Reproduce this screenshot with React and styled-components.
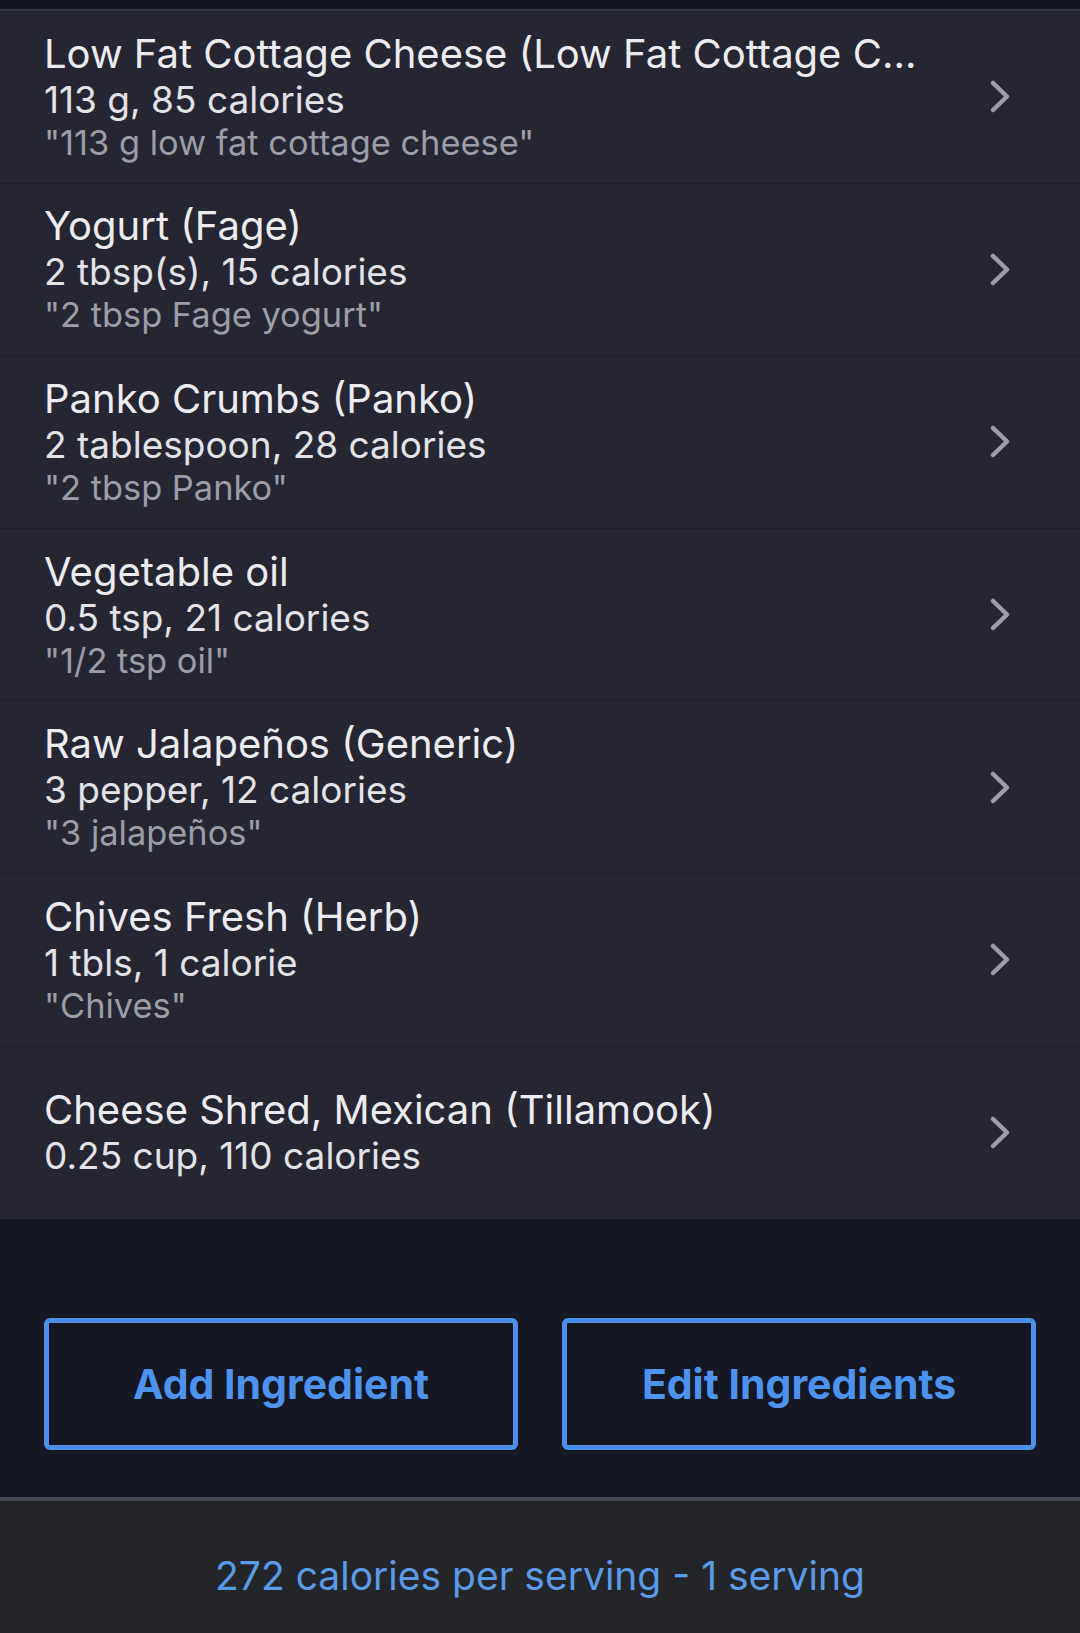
// App.jsx
import React from "react";
import styled, { createGlobalStyle } from "styled-components";

const GlobalStyle = createGlobalStyle`
  html, body {
    margin: 0;
    padding: 0;
    background: #151722;
  }
  body {
    font-family: Inter, "Noto Sans", "Liberation Sans", sans-serif;
    -webkit-font-smoothing: antialiased;
  }
`;

const Page = styled.div`
  width: 1080px;
  height: 1633px;
  display: flex;
  flex-direction: column;
  background: #151722;
  overflow: hidden;
`;

const TopStrip = styled.div`
  height: 9px;
  background: #131622;
  border-bottom: 2px solid #363945;
`;

const List = styled.div`
  display: flex;
  flex-direction: column;
`;

const Row = styled.div`
  height: 171.6px;
  display: flex;
  align-items: center;
  padding: 0 44px;
  background: #252632;
  border-bottom: 1px solid ${(p) => (p.$last ? "#2d2f3b" : "#1d1e28")};
`;

const Texts = styled.div`
  flex: 1;
  min-width: 0;
  display: flex;
  flex-direction: column;
`;

const Title = styled.div`
  font-size: 40px;
  line-height: 48px;
  color: #ececf0;
  white-space: nowrap;
  overflow: hidden;
  text-overflow: ellipsis;
  max-width: 910px;
`;

const Amount = styled.div`
  font-size: 37px;
  line-height: 44px;
  color: #e2e2e7;
`;

const Quote = styled.div`
  font-size: 34.4px;
  line-height: 42px;
  color: #9c9da5;
`;

const Chevron = styled.svg`
  width: 22px;
  height: 35px;
  flex: none;
  margin-right: 25px;
`;

const Actions = styled.div`
  flex: 1;
  display: flex;
  gap: 44px;
  padding: 99px 44px 0;
`;

const ActionButton = styled.button`
  width: 475px;
  height: 132px;
  box-sizing: border-box;
  background: transparent;
  border: 5px solid #4b8fe8;
  border-radius: 6px;
  color: #4d93ee;
  font-family: Inter, "Noto Sans", "Liberation Sans", sans-serif;
  font-size: 41px;
  font-weight: 700;
  cursor: pointer;
`;

const Footer = styled.div`
  height: 136px;
  box-sizing: border-box;
  border-top: 4px solid #44464d;
  background: #242529;
  display: flex;
  align-items: center;
  justify-content: center;
  padding-top: 16px;
  font-size: 39px;
  color: #5a9be8;
`;

const ingredients = [
  {
    name: "Low Fat Cottage Cheese (Low Fat Cottage C...",
    amount: "113 g, 85 calories",
    quote: '"113 g low fat cottage cheese"',
  },
  { name: "Yogurt (Fage)", amount: "2 tbsp(s), 15 calories", quote: '"2 tbsp Fage yogurt"' },
  { name: "Panko Crumbs (Panko)", amount: "2 tablespoon, 28 calories", quote: '"2 tbsp Panko"' },
  { name: "Vegetable oil", amount: "0.5 tsp, 21 calories", quote: '"1/2 tsp oil"' },
  { name: "Raw Jalapeños (Generic)", amount: "3 pepper, 12 calories", quote: '"3 jalapeños"' },
  { name: "Chives Fresh (Herb)", amount: "1 tbls, 1 calorie", quote: '"Chives"' },
  { name: "Cheese Shred, Mexican (Tillamook)", amount: "0.25 cup, 110 calories" },
];

const ChevronIcon = () => (
  <Chevron viewBox="0 0 22 35">
    <polyline
      points="4,4 18,17.5 4,31"
      fill="none"
      stroke="#9d9ea4"
      strokeWidth="4.5"
      strokeLinecap="round"
      strokeLinejoin="round"
    />
  </Chevron>
);

export default function App() {
  return (
    <>
      <GlobalStyle />
      <Page>
        <TopStrip />
        <List>
          {ingredients.map((item, i) => (
            <Row key={item.name} $last={i === ingredients.length - 1}>
              <Texts>
                <Title>{item.name}</Title>
                <Amount>{item.amount}</Amount>
                {item.quote && <Quote>{item.quote}</Quote>}
              </Texts>
              <ChevronIcon />
            </Row>
          ))}
        </List>
        <Actions>
          <ActionButton>Add Ingredient</ActionButton>
          <ActionButton>Edit Ingredients</ActionButton>
        </Actions>
        <Footer>272 calories per serving - 1 serving</Footer>
      </Page>
    </>
  );
}
